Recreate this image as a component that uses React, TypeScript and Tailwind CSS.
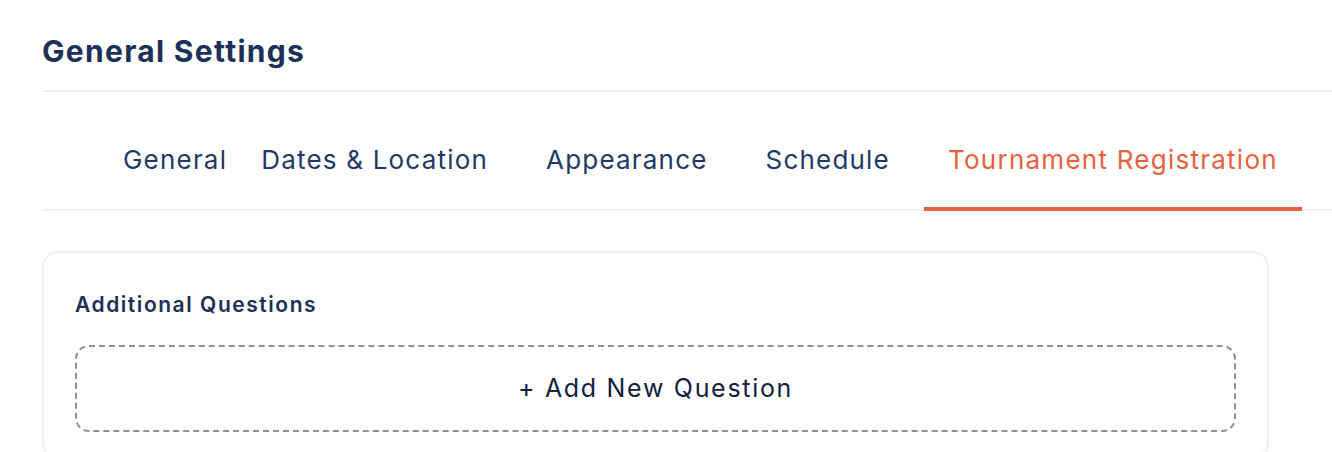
export default function App() {
  const tabs = ["General", "Dates & Location", "Appearance", "Schedule", "Tournament Registration"];
  const active = "Tournament Registration";

  return (
    <div className="min-h-screen bg-white font-['Inter','Liberation_Sans',sans-serif]">
      <div className="pl-[42px]">
        {/* page title */}
        <div className="h-[90px] pt-[31px]">
          <h1 className="text-[30px] leading-[40px] font-bold text-[#1d3057] tracking-[1.3px]">
            General Settings
          </h1>
        </div>

        {/* tabs */}
        <div className="border-t-2 border-b-2 border-[#eeeff2]">
          <nav className="flex h-[117px] items-end pl-[57px] gap-[10px]">
            {tabs.map((t) => (
              <button
                key={t}
                className={
                  t === active
                    ? "h-full flex items-center px-6 pt-[17px] border-b-4 border-[#e8613f] text-[#e8613f] text-[26px] tracking-[1.25px] -mb-[2px]"
                    : t === "General"
                      ? "h-full flex items-center pl-6 pr-0 pt-[17px] border-b-4 border-transparent text-[#213a63] text-[26px] tracking-[1.2px] -mb-[2px]"
                      : "h-full flex items-center px-6 pt-[17px] border-b-4 border-transparent text-[#213a63] text-[26px] tracking-[1.2px] -mb-[2px]"
                }
              >
                {t}
              </button>
            ))}
          </nav>
        </div>

        {/* card */}
        <div className="mt-[40px] w-[1227px] rounded-2xl border-2 border-[#eef0f5] px-[31px] pt-[38px] pb-6">
          <h2 className="text-[21px] leading-[28px] font-semibold text-[#1d3057] tracking-[1.55px]">
            Additional Questions
          </h2>
          <button className="mt-[26px] w-full h-[87px] rounded-[14px] border-2 border-dashed border-[#8d909c] flex items-center justify-center text-[25px] text-[#11203d] tracking-[1.7px]">
            + Add New Question
          </button>
        </div>
      </div>
    </div>
  );
}
